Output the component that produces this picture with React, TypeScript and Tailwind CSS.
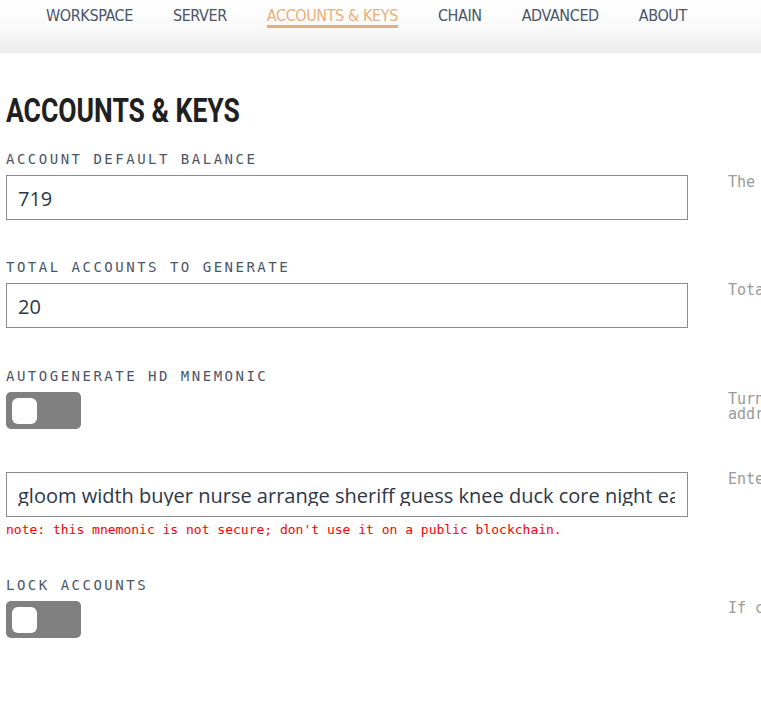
import React from "react";

const navItems = ["WORKSPACE", "SERVER", "ACCOUNTS & KEYS", "CHAIN", "ADVANCED", "ABOUT"];

function Toggle() {
  return (
    <div className="w-[75px] h-[37px] rounded-[5px] bg-[#808080] flex items-center pl-[6px]">
      <div className="w-[25px] h-[26px] rounded-[6px] bg-white" />
    </div>
  );
}

function Label({ children }: { children: React.ReactNode }) {
  return (
    <div
      className="text-[14px] leading-[20px] tracking-[2.5px] text-[#4a5568] mb-[6px]"
      style={{ fontFamily: '"DejaVu Sans Mono", monospace' }}
    >
      {children}
    </div>
  );
}

function Desc({ children }: { children: React.ReactNode }) {
  return (
    <div
      className="text-[15px] leading-[15px] text-[#9a9a9a] whitespace-nowrap"
      style={{ fontFamily: '"DejaVu Sans Mono", monospace' }}
    >
      {children}
    </div>
  );
}

function Row({
  label,
  control,
  desc,
  className,
}: {
  label?: string;
  control: React.ReactNode;
  desc: React.ReactNode;
  className?: string;
}) {
  return (
    <div className={className}>
      {label && <Label>{label}</Label>}
      <div className="flex gap-[40px]">
        <div className="w-[682px] shrink-0">{control}</div>
        <div className="w-[400px] shrink-0">{desc}</div>
      </div>
    </div>
  );
}

function TextInput({ value }: { value: string }) {
  return (
    <div
      className="h-[45px] border border-[#8c8c8c] bg-white flex items-center pl-[11px] pr-[12px] overflow-hidden whitespace-nowrap text-[20px] text-[#2d3748]"
      style={{ fontFamily: '"Open Sans", "Noto Sans", sans-serif' }}
    >
      <span className="block h-[22px] leading-[24px] overflow-hidden">{value}</span>
    </div>
  );
}

export default function App() {
  return (
    <div className="w-[761px] h-[705px] bg-white overflow-hidden relative">
      <header className="h-[53px] bg-gradient-to-b from-white via-[#fafafa] to-[#ececec] shadow-[0_1px_2px_rgba(0,0,0,0.04)]">
        <nav
          className="flex pl-[26px] pt-[7px]"
          style={{ fontFamily: '"DejaVu Sans Condensed", sans-serif' }}
        >
          {navItems.map((item) => {
            const active = item === "ACCOUNTS & KEYS";
            return (
              <div key={item} className="px-[20px]">
                <div
                  className={
                    "text-[16px] leading-[18px] tracking-[-0.4px] border-b-[3px] " +
                    (active ? "text-[#e9b07a] border-[#e4ad79]" : "text-[#4a5568] border-transparent")
                  }
                >
                  {item}
                </div>
              </div>
            );
          })}
        </nav>
      </header>

      <main className="px-[6px]">
        <h1
          className="mt-[37px] h-[40px] text-[34px] leading-[40px] font-bold text-[#202020] whitespace-nowrap"
          style={{ fontFamily: 'Roboto, "Liberation Sans", sans-serif' }}
        >
          <span className="inline-block origin-left scale-x-[0.78]">ACCOUNTS &amp; KEYS</span>
        </h1>

        <Row
          className="mt-[19px]"
          label="ACCOUNT DEFAULT BALANCE"
          control={<TextInput value="719" />}
          desc={<Desc>The starting balance for accounts, in Ether.</Desc>}
        />
        <Row
          className="mt-[37px]"
          label="TOTAL ACCOUNTS TO GENERATE"
          control={<TextInput value="20" />}
          desc={<Desc>Total number of accounts to create and pre-fund.</Desc>}
        />
        <Row
          className="mt-[38px]"
          label="AUTOGENERATE HD MNEMONIC"
          control={<Toggle />}
          desc={
            <Desc>
              Turn on to automatically generate a new mnemonic and account
              <br />
              addresses on each start.
            </Desc>
          }
        />
        <Row
          className="mt-[43px]"
          control={
            <div>
              <TextInput value="gloom width buyer nurse arrange sheriff guess knee duck core night early" />
              <div
                className="text-[13px] leading-[18px] text-[#ff0000] mt-[4px]"
                style={{ fontFamily: '"DejaVu Sans Mono", monospace' }}
              >
                note: this mnemonic is not secure; don't use it on a public blockchain.
              </div>
            </div>
          }
          desc={<Desc>Enter the Mnemonic you wish to use.</Desc>}
        />
        <Row
          className="mt-[36px]"
          label="LOCK ACCOUNTS"
          control={<Toggle />}
          desc={<Desc>If checked, accounts will be locked on startup.</Desc>}
        />
      </main>
    </div>
  );
}
